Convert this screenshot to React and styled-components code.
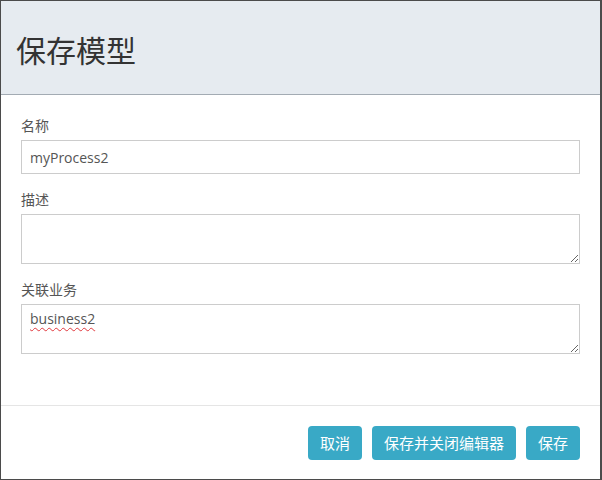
import React from "react";
import styled, { createGlobalStyle } from "styled-components";

const Global = createGlobalStyle`
  html, body { margin: 0; padding: 0; }
  body {
    background: #4b4b4b;
    width: 602px;
    height: 480px;
    overflow: hidden;
    font-family: "Open Sans", "Noto Sans CJK SC", sans-serif;
  }
`;

const Modal = styled.div`
  margin: 1px 0 0 1px;
  width: 599px;
  height: 478px;
  background: #fff;
  display: flex;
  flex-direction: column;
  box-sizing: border-box;
`;

const Header = styled.div`
  height: 94px;
  box-sizing: border-box;
  background: #e6ebf0;
  border-bottom: 1px solid #a3abb3;
  display: flex;
  align-items: center;
  padding: 0 15px 0 15px;
`;

const Title = styled.h2`
  margin: 0;
  padding-top: 2px;
  font-family: "Noto Sans CJK SC", sans-serif;
  font-weight: 400;
  font-size: 30px;
  line-height: 36px;
  color: #333;
`;

const Body = styled.div`
  flex: 1;
  padding: 20px 20px 0 20px;
  display: flex;
  flex-direction: column;
  gap: 15px;
`;

const Group = styled.div`
  display: flex;
  flex-direction: column;
  gap: 5px;
`;

const Label = styled.label`
  font-family: "Noto Sans CJK SC", sans-serif;
  font-size: 14px;
  line-height: 20px;
  color: #555;
`;

const Input = styled.input`
  box-sizing: border-box;
  height: 34px;
  width: 100%;
  border: 1px solid #ccc;
  padding: 6px 8px;
  font-family: "Open Sans", "Noto Sans CJK SC", sans-serif;
  font-size: 14px;
  color: #555;
  outline: none;
  margin: 0;
`;

const TextArea = styled.textarea`
  box-sizing: border-box;
  height: 50px;
  width: 100%;
  border: 1px solid #ccc;
  padding: 6px 8px;
  font-family: "Open Sans", "Noto Sans CJK SC", sans-serif;
  font-size: 14px;
  line-height: 16px;
  color: #555;
  outline: none;
  margin: 0;
  resize: both;
  text-decoration: ${(p) => (p.$misspelled ? "underline wavy #e0393e" : "none")};
  text-decoration-thickness: 1px;
  text-underline-offset: 3px;
`;

const Footer = styled.div`
  border-top: 1px solid #e5e5e5;
  padding: 20px 20px 19px 20px;
  display: flex;
  justify-content: flex-end;
  gap: 10px;
`;

const Button = styled.button`
  height: 34px;
  padding: 0 12px;
  border: none;
  border-radius: 4px;
  background: #39a9c6;
  color: #fff;
  font-family: "Noto Sans CJK SC", sans-serif;
  font-size: 15px;
  line-height: 34px;
  cursor: pointer;
`;

export default function App() {
  return (
    <>
      <Global />
      <Modal>
        <Header>
          <Title>保存模型</Title>
        </Header>
        <Body>
          <Group>
            <Label>名称</Label>
            <Input defaultValue="myProcess2" />
          </Group>
          <Group>
            <Label>描述</Label>
            <TextArea defaultValue="" />
          </Group>
          <Group>
            <Label>关联业务</Label>
            <TextArea $misspelled defaultValue="business2" />
          </Group>
        </Body>
        <Footer>
          <Button>取消</Button>
          <Button>保存并关闭编辑器</Button>
          <Button>保存</Button>
        </Footer>
      </Modal>
    </>
  );
}
